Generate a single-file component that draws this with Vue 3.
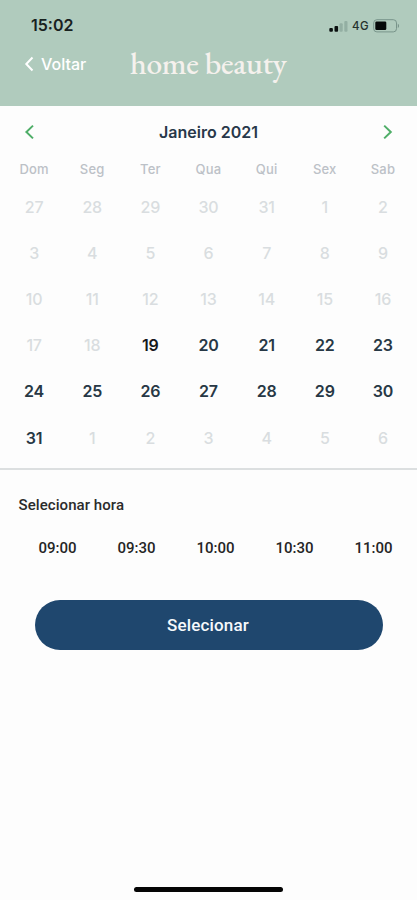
<template>
  <main class="screen">
    <header class="header">
      <div class="status">
        <span class="clock">15:02</span>
        <div class="indicators">
          <svg class="signal" width="20" height="12" viewBox="0 0 20 12" aria-hidden="true">
            <rect x="1.3" y="8" width="3.6" height="3.8" rx="1" fill="#0b1110" />
            <rect x="6.5" y="6" width="3.6" height="5.8" rx="1" fill="#0b1110" />
            <rect x="11.5" y="3.3" width="3.2" height="8.5" rx="1" fill="#93afa3" />
            <rect x="16.3" y="1" width="3.2" height="10.8" rx="1" fill="#93afa3" />
          </svg>
          <span class="network">4G</span>
          <svg class="battery" width="27" height="14" viewBox="0 0 27 14" aria-hidden="true">
            <rect x="0.7" y="0.7" width="22.8" height="12.2" rx="3.2" fill="none" stroke="#78948a" />
            <rect x="2.3" y="2.5" width="11" height="8.6" rx="1.3" fill="#050808" />
            <path d="M24.8 4.7c1.7.7 1.7 3.6 0 4.3z" fill="#78948a" />
          </svg>
        </div>
      </div>

      <div class="navbar">
        <button class="back" type="button">
          <svg width="10" height="16" viewBox="0 0 10 16" aria-hidden="true">
            <path d="M8.5 1.5 2.3 8l6.2 6.5" fill="none" stroke="#fff" stroke-width="2" />
          </svg>
          <span>Voltar</span>
        </button>
        <span class="brand">home beauty</span>
      </div>
    </header>

    <section class="calendar">
      <div class="month">
        <button class="arrow" type="button" aria-label="Mês anterior" @click="changeMonth(-1)">
          <svg width="10" height="16" viewBox="0 0 10 16" aria-hidden="true">
            <path d="M9 1.6 2.4 8 9 14.4" fill="none" stroke="#4fae68" stroke-width="2" />
          </svg>
        </button>
        <h1 class="month-title">{{ monthTitle }}</h1>
        <button class="arrow" type="button" aria-label="Próximo mês" @click="changeMonth(1)">
          <svg width="10" height="16" viewBox="0 0 10 16" aria-hidden="true">
            <path d="M1.2 1.6 7.8 8l-6.6 6.4" fill="none" stroke="#4fae68" stroke-width="2" />
          </svg>
        </button>
      </div>

      <div class="weekdays">
        <span v-for="w in weekdays" :key="w">{{ w }}</span>
      </div>

      <div class="days">
        <button
          v-for="d in days"
          :key="d.key"
          class="day"
          type="button"
          :class="{ off: !d.enabled, today: d.today }"
          :disabled="!d.enabled"
        >
          {{ d.day }}
        </button>
      </div>
    </section>

    <section class="schedule">
      <h2 class="schedule-title">Selecionar hora</h2>
      <div class="hours">
        <button v-for="h in hours" :key="h" class="hour" type="button" @click="selectedHour = h">
          {{ h }}
        </button>
      </div>
      <button class="btn-select" type="button">Selecionar</button>
    </section>

    <div class="home-bar"></div>
  </main>
</template>

<script setup>
import { computed, ref } from 'vue'

const weekdays = ['Dom', 'Seg', 'Ter', 'Qua', 'Qui', 'Sex', 'Sab']
const months = [
  'Janeiro', 'Fevereiro', 'Março', 'Abril', 'Maio', 'Junho',
  'Julho', 'Agosto', 'Setembro', 'Outubro', 'Novembro', 'Dezembro',
]
const hours = ['09:00', '09:30', '10:00', '10:30', '11:00']

const today = new Date(2021, 0, 19)
const current = ref(new Date(2021, 0, 1))
const selectedHour = ref('')

const monthTitle = computed(() => {
  return `${months[current.value.getMonth()]} ${current.value.getFullYear()}`
})

const days = computed(() => {
  const year = current.value.getFullYear()
  const month = current.value.getMonth()
  const offset = new Date(year, month, 1).getDay()

  return Array.from({ length: 42 }, (_, i) => {
    const date = new Date(year, month, 1 - offset + i)
    return {
      key: `${date.getMonth()}-${date.getDate()}`,
      day: date.getDate(),
      enabled: date.getMonth() === month && date >= today,
      today: date.getTime() === today.getTime(),
    }
  })
})

function changeMonth(step) {
  current.value = new Date(current.value.getFullYear(), current.value.getMonth() + step, 1)
}
</script>

<style>
body {
  margin: 0;
  background: #fdfdfd;
}
</style>

<style scoped>
.screen {
  height: 900px;
  display: flex;
  flex-direction: column;
  box-sizing: border-box;
  overflow: hidden;
  background: #fdfdfd;
  font-family: Inter, 'Liberation Sans', sans-serif;
}

button {
  padding: 0;
  border: 0;
  background: transparent;
  font-family: inherit;
  cursor: pointer;
}

svg {
  display: block;
}

.header {
  height: 106px;
  flex: none;
  background: #b0cbbd;
}

.status {
  height: 51px;
  padding: 0 17px 0 31px;
  box-sizing: border-box;
  display: flex;
  align-items: center;
  justify-content: space-between;
}

.clock {
  font-size: 16px;
  line-height: 20px;
  padding-bottom: 1px;
  font-weight: 600;
  color: #18211e;
}

.indicators {
  display: flex;
  align-items: center;
}

.network {
  margin: 0 4px 0 4px;
  font-size: 11.5px;
  font-weight: 500;
  letter-spacing: 0.4px;
  color: #25322d;
}

.navbar {
  height: 26px;
  padding-left: 24px;
  display: flex;
  align-items: center;
}

.back {
  width: 106px;
  display: flex;
  align-items: center;
  gap: 7px;
  font-size: 16px;
  font-weight: 500;
  color: #fff;
}

.brand {
  padding-bottom: 2px;
  font-family: 'EB Garamond', 'Liberation Serif', serif;
  font-size: 31.5px;
  line-height: 26px;
  font-weight: 500;
  letter-spacing: -0.35px;
  color: #f5f1ed;
  white-space: nowrap;
}

.calendar {
  height: 362px;
  flex: none;
  border-bottom: 2px solid #dcdfe0;
}

.month {
  height: 52px;
  padding: 0 24px;
  display: flex;
  align-items: center;
  justify-content: space-between;
}

.month-title {
  margin: 0;
  font-size: 16px;
  font-weight: 600;
  color: #28384a;
}

.weekdays,
.days {
  padding: 0 5px;
  display: grid;
  grid-template-columns: repeat(7, 1fr);
  text-align: center;
}

.weekdays {
  height: 26px;
  line-height: 23px;
  font-size: 13px;
  font-weight: 500;
  letter-spacing: 0.2px;
  color: #bcc1c7;
}

.days {
  grid-auto-rows: 46.1px;
}

.day {
  font-size: 16px;
  font-weight: 600;
  letter-spacing: -0.2px;
  color: #273845;
}

.day.today {
  color: #16191c;
}

.day.off {
  font-weight: 500;
  color: #d9dde0;
  cursor: default;
}

.schedule-title {
  margin: 26px 0 0 18.5px;
  font-family: Roboto, sans-serif;
  font-size: 15px;
  line-height: 18px;
  font-weight: 500;
  letter-spacing: 0.07px;
  color: #2b2b2b;
}

.hours {
  margin-top: 24px;
  padding: 0 3px 0 18px;
  display: grid;
  grid-template-columns: repeat(5, 79px);
}

.hour {
  height: 20px;
  font-family: Roboto, sans-serif;
  font-size: 15px;
  font-weight: 500;
  color: #252525;
}

.btn-select {
  display: block;
  width: 348px;
  height: 50px;
  margin: 42px 34px 0 35px;
  padding-right: 2px;
  border-radius: 25px;
  background: #1f476e;
  font-family: Roboto, sans-serif;
  font-size: 17px;
  font-weight: 500;
  letter-spacing: 0.15px;
  color: #f6f9fc;
}

.home-bar {
  width: 149px;
  height: 5px;
  margin: auto auto 8px;
  border-radius: 3px;
  background: #050505;
}
</style>
